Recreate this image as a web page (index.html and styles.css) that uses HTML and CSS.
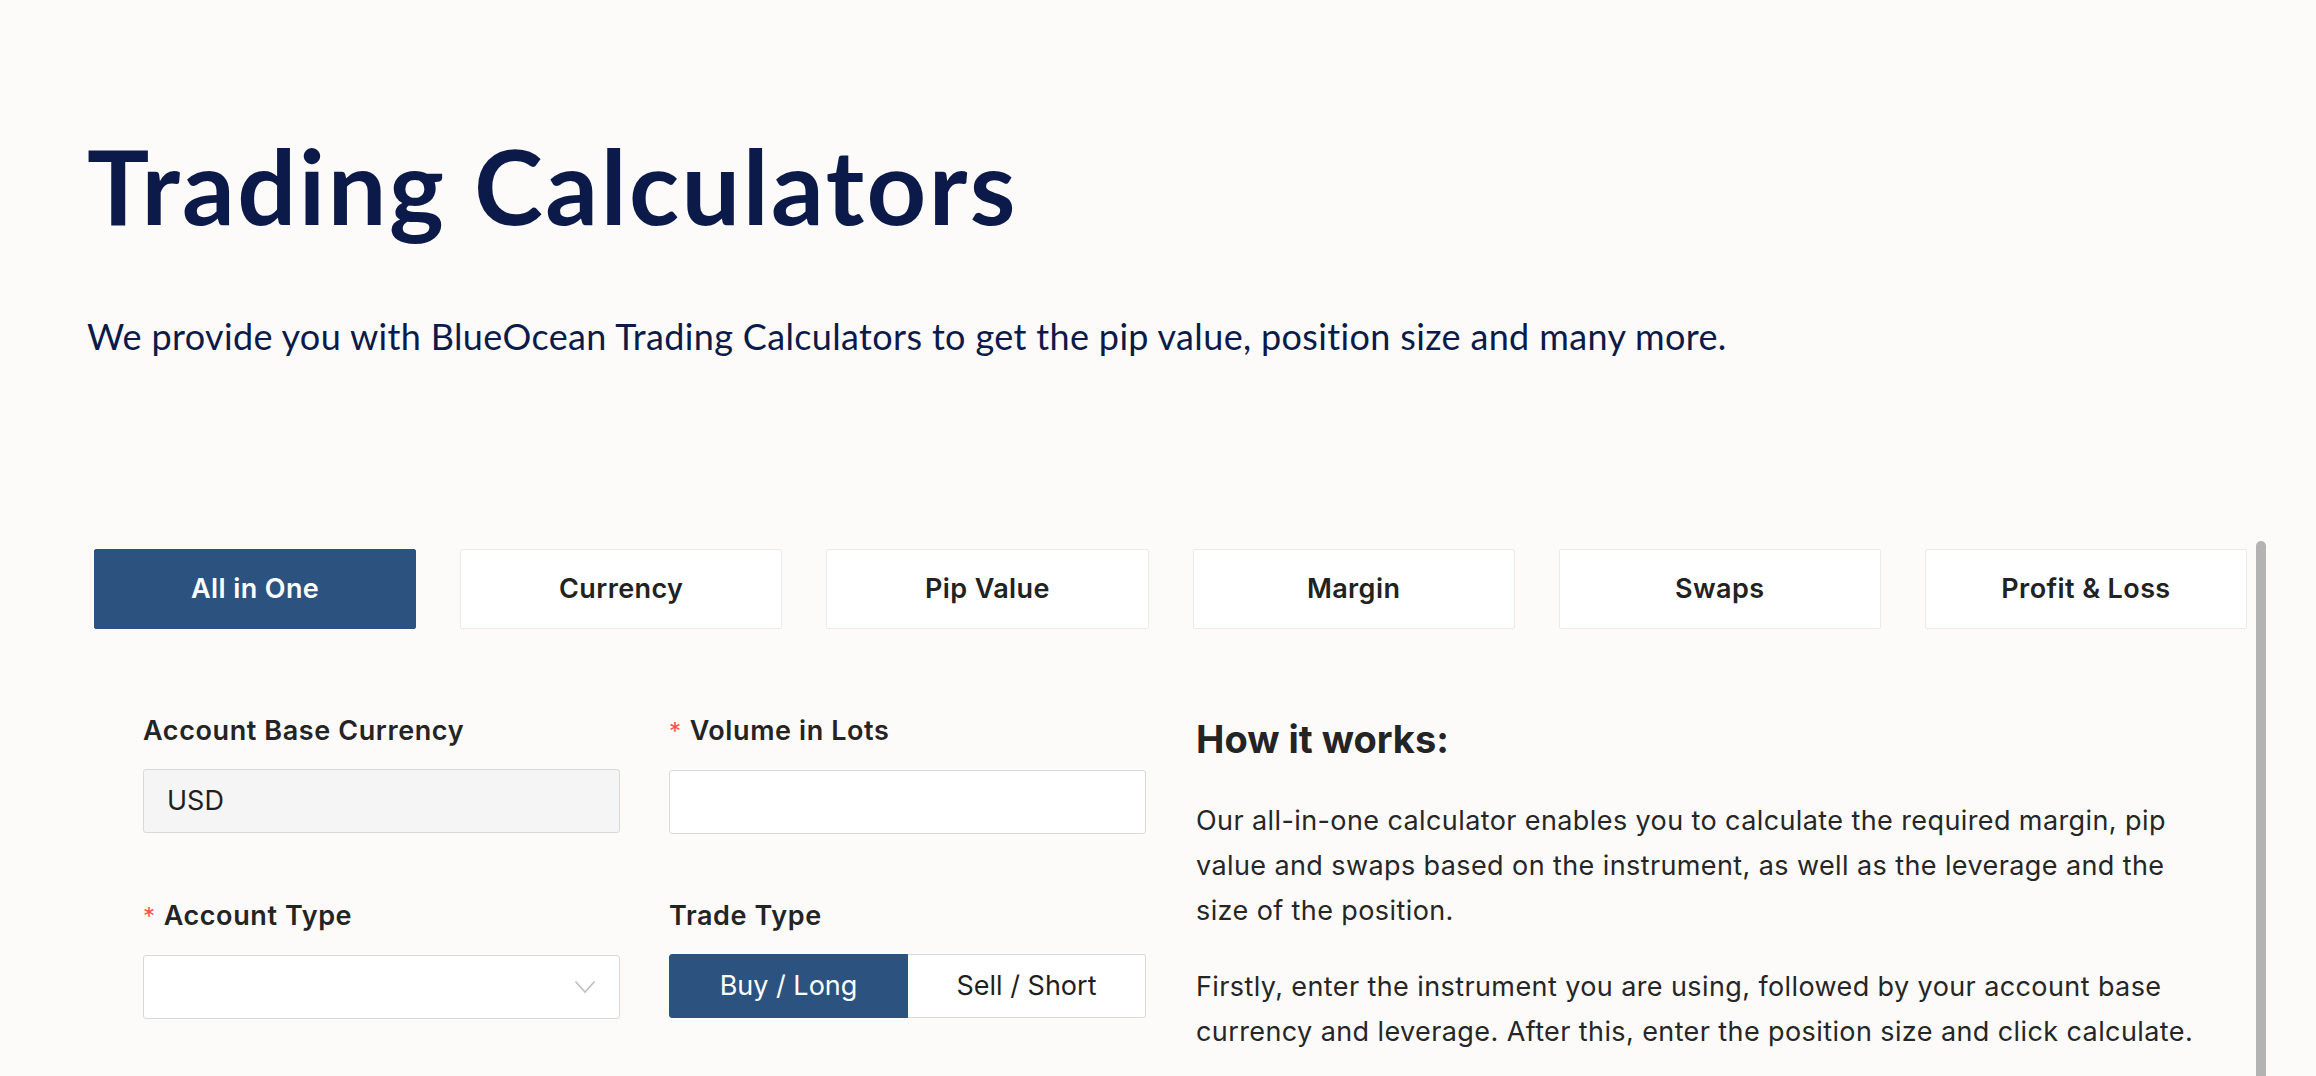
FILE: index.html
```html
<!DOCTYPE html>
<html lang="en">
<head>
<meta charset="utf-8">
<title>Trading Calculators</title>
<link rel="stylesheet" href="styles.css">
</head>
<body>
<main class="page">
  <header class="hero">
    <h1 class="hero-title">Trading Calculators</h1>
    <p class="hero-sub">We provide you with BlueOcean Trading Calculators to get the pip value, position size and many more.</p>
  </header>

  <section class="calc">
    <div class="calc-body">
      <nav class="tabs">
        <button class="tab tab-active">All in One</button>
        <button class="tab">Currency</button>
        <button class="tab">Pip Value</button>
        <button class="tab">Margin</button>
        <button class="tab">Swaps</button>
        <button class="tab">Profit &amp; Loss</button>
      </nav>

      <div class="panel">
        <form class="form-grid">
          <div class="field">
            <label class="field-label">Account Base Currency</label>
            <div class="input input-disabled">USD</div>
          </div>
          <div class="field">
            <label class="field-label"><span class="req">*</span>Volume in Lots</label>
            <div class="input"></div>
          </div>
          <div class="field">
            <label class="field-label"><span class="req">*</span>Account Type</label>
            <div class="input select">
              <svg class="chevron" width="22" height="14" viewBox="0 0 22 14"><polyline points="1.5,1.5 11,12 20.5,1.5" fill="none" stroke="#bfbfbf" stroke-width="1.6"/></svg>
            </div>
          </div>
          <div class="field">
            <label class="field-label">Trade Type</label>
            <div class="segmented">
              <button type="button" class="seg seg-active">Buy / Long</button>
              <button type="button" class="seg">Sell / Short</button>
            </div>
          </div>
        </form>

        <article class="how">
          <h2 class="how-title">How it works:</h2>
          <p class="how-text">Our all-in-one calculator enables you to calculate the required margin, pip<br>value and swaps based on the instrument, as well as the leverage and the<br>size of the position.</p>
          <p class="how-text">Firstly, enter the instrument you are using, followed by your account base currency and leverage. After this, enter the position size and click calculate.</p>
        </article>
      </div>
    </div>
    <div class="scrollbar"><div class="thumb"></div></div>
  </section>
</main>
</body>
</html>
```

FILE: styles.css
```css
html, body {
  margin: 0;
  padding: 0;
  background: #fcfbf9;
  overflow: hidden;
}

.page {
  font-family: "Inter", "Liberation Sans", sans-serif;
}

.hero {
  padding-left: 87px;
}

.hero-title {
  margin: 123px 0 0;
  font-family: "Lato", "Liberation Sans", sans-serif;
  font-weight: 700;
  font-size: 104px;
  line-height: 1.2;
  letter-spacing: 2.5px;
  color: #0c1a49;
}

.hero-sub {
  margin: 67px 0 0;
  font-family: "Lato", "Liberation Sans", sans-serif;
  font-weight: 400;
  font-size: 36px;
  line-height: 42px;
  letter-spacing: 0.35px;
  color: #0c1a49;
}

.calc {
  margin-top: 184px;
  padding-left: 94px;
  display: flex;
  gap: 9px;
  height: 620px;
  overflow: hidden;
}

.calc-body {
  width: 2153px;
  padding-top: 8px;
}

.tabs {
  display: flex;
  gap: 44px;
}

.tab {
  flex: 1;
  height: 80px;
  background: #ffffff;
  border: 1px solid #ebebeb;
  border-radius: 2px;
  font-family: "Inter", "Liberation Sans", sans-serif;
  font-weight: 600;
  font-size: 27px;
  letter-spacing: 0.4px;
  color: #222222;
  padding: 0;
}

.tab-active {
  background: #2c5380;
  border-color: #2c5380;
  color: #ffffff;
}

.panel {
  display: flex;
  padding-top: 84px;
}

.form-grid {
  margin: 0;
  padding-left: 49px;
  display: grid;
  grid-template-columns: 477px 477px;
  column-gap: 49px;
  row-gap: 64px;
  align-content: start;
}

.field-label {
  display: block;
  font-weight: 600;
  font-size: 27px;
  line-height: 36px;
  letter-spacing: 0.6px;
  color: #242424;
  margin-bottom: 20px;
}

.req {
  color: #ff4d4f;
  font-weight: 400;
  font-size: 24px;
  margin-right: 8px;
}

.input {
  box-sizing: border-box;
  height: 64px;
  border: 1px solid #d9d9d9;
  border-radius: 3px;
  background: #ffffff;
  padding: 0 23px;
  display: flex;
  align-items: center;
  font-size: 27px;
  color: #1f1f1f;
}

.input-disabled {
  background: #f5f5f5;
}

.select {
  justify-content: flex-end;
}

.chevron {
  display: block;
}

.segmented {
  display: flex;
  height: 64px;
}

.seg {
  flex: 1;
  margin: 0;
  border: 1px solid #d9d9d9;
  background: #ffffff;
  font-family: "Inter", "Liberation Sans", sans-serif;
  font-size: 27px;
  color: #1f1f1f;
  padding: 0;
}

.seg:first-child {
  border-radius: 3px 0 0 3px;
}

.seg:last-child {
  border-left: none;
  border-radius: 0 3px 3px 0;
}

.seg-active {
  background: #2c5380;
  border-color: #2c5380;
  color: #ffffff;
}

.how {
  margin-left: 50px;
  width: 1035px;
}

.how-title {
  margin: 3px 0 0;
  font-weight: 700;
  font-size: 38px;
  line-height: 46px;
  color: #242424;
}

.how-text {
  margin: 36px 0 0;
  font-size: 27px;
  line-height: 45px;
  letter-spacing: 0.4px;
  color: #262626;
}

.how-text + .how-text {
  margin-top: 31px;
}

.scrollbar {
  width: 10px;
  flex: none;
}

.thumb {
  width: 10px;
  height: 900px;
  border-radius: 5px;
  background: #b3b3b3;
}
```
